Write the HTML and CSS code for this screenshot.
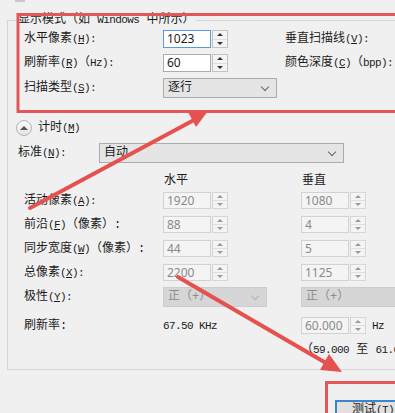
FILE: index.html
```html
<!DOCTYPE html>
<html lang="zh-CN">
<head>
  <meta charset="UTF-8">
  <meta name="viewport" content="width=device-width, initial-scale=1.0">
  <title>显示模式</title>
  <link rel="stylesheet" href="styles.css">
</head>
<body>
  <div class="screen">
    <div class="stub"></div>

    <fieldset class="mode">
      <legend>显示模式（如 <span class="lat">Windows</span> 中所示）</legend>

      <div class="mode-grid">
        <label>水平像素<span class="lat">(<u>H</u>):</span></label>
        <div class="spinbox tall"><span class="box focus">1023</span><span class="spin"><i></i><i class="down"></i></span></div>
        <label>垂直扫描线<span class="lat">(<u>V</u>):</span></label>

        <label>刷新率<span class="lat">(<u>R</u>)</span>（<span class="lat">Hz):</span></label>
        <div class="spinbox tall"><span class="box">60</span><span class="spin"><i></i><i class="down"></i></span></div>
        <label>颜色深度<span class="lat">(<u>C</u>)</span>（<span class="lat">bpp):</span></label>

        <label>扫描类型<span class="lat">(<u>S</u>):</span></label>
        <div class="combo scan">逐行</div>
        <span></span>
      </div>

      <div class="toggle"><span class="collapse"></span>计时<span class="lat">(<u>M</u>)</span></div>

      <div class="standard">
        <label>标准<span class="lat">(<u>N</u>):</span></label>
        <div class="combo wide">自动</div>
      </div>

      <div class="trow head"><span></span><span>水平</span><span>垂直</span></div>

      <div class="trow off">
        <label>活动像素<span class="lat">(<u>A</u>):</span></label>
        <div class="spinbox"><span class="box">1920</span><span class="spin"><i></i><i class="down"></i></span></div>
        <div class="spinbox"><span class="box">1080</span><span class="spin"><i></i><i class="down"></i></span></div>
      </div>
      <div class="trow off">
        <label>前沿<span class="lat">(<u>F</u>)</span>（像素）:</label>
        <div class="spinbox"><span class="box">88</span><span class="spin"><i></i><i class="down"></i></span></div>
        <div class="spinbox"><span class="box">4</span><span class="spin"><i></i><i class="down"></i></span></div>
      </div>
      <div class="trow off">
        <label>同步宽度<span class="lat">(<u>W</u>)</span>（像素）:</label>
        <div class="spinbox"><span class="box">44</span><span class="spin"><i></i><i class="down"></i></span></div>
        <div class="spinbox"><span class="box">5</span><span class="spin"><i></i><i class="down"></i></span></div>
      </div>
      <div class="trow off">
        <label>总像素<span class="lat">(<u>X</u>):</span></label>
        <div class="spinbox"><span class="box">2200</span><span class="spin"><i></i><i class="down"></i></span></div>
        <div class="spinbox"><span class="box">1125</span><span class="spin"><i></i><i class="down"></i></span></div>
      </div>
      <div class="trow polarity off">
        <label>极性<span class="lat">(<u>Y</u>):</span></label>
        <div class="combo dis">正（+）</div>
        <div class="combo dis long">正（+）</div>
      </div>
      <div class="trow refresh off">
        <label>刷新率:</label>
        <span class="lat">67.50 KHz</span>
        <div class="hz">
          <div class="spinbox"><span class="box">60.000</span><span class="spin"><i></i><i class="down"></i></span></div>
          <span class="lat">Hz</span>
        </div>
      </div>
      <div class="trow range">
        <span></span><span></span>
        <span>（<span class="lat">59.000</span> 至 <span class="lat">61.000</span>）</span>
      </div>
    </fieldset>

    <div class="footer">
      <button type="button">测试<span class="lat">(<u>T</u>)</span></button>
    </div>

    <!-- annotation marks drawn over the dialog -->
    <svg class="marks" width="395" height="413" viewBox="0 0 395 413">
      <g fill="none" stroke="#e2575a" stroke-width="3">
        <rect x="18" y="14.5" width="400" height="97"/>
        <rect x="326.5" y="382.5" width="100" height="60"/>
      </g>
      <g stroke="#e5514f" stroke-width="4" stroke-linecap="round">
        <line x1="30" y1="208" x2="194" y2="120"/>
        <line x1="178" y1="277" x2="326" y2="363"/>
      </g>
      <g fill="#e5514f">
        <polygon points="208,111 196,127 188,112"/>
        <polygon points="342,372 320,370 329,354"/>
      </g>
    </svg>
  </div>
</body>
</html>
```

FILE: styles.css
```css
* {
  box-sizing: border-box;
}
body {
  margin: 0;
  background: #f0f0f0;
  font-family: "Liberation Mono", "Noto Sans CJK SC", monospace;
  font-size: 12px;
  line-height: 16px;
  color: #1b1b1b;
}
u {
  text-decoration: underline;
  text-underline-offset: 1px;
}
.screen {
  position: relative;
  width: 395px;
  height: 413px;
  overflow: hidden;
}
.stub {
  margin-left: 15px;
  width: 10px;
  height: 2px;
  background: #c9c9c9;
}
/* half-width latin, like the dialog's bitmap font */
.lat {
  font-family: "Liberation Mono", monospace;
  font-size: 11px;
  letter-spacing: -0.6px;
}

/* group box */
.mode {
  margin: 10px 0 0 7px;
  padding: 0;
  width: 400px;
  height: 358px;
  min-width: 0;
  border: 1px solid #d5d5d5;
}
.mode legend {
  margin-left: 8px;
  padding: 0 2px;
  line-height: 16px;
}
.mode-grid {
  display: grid;
  grid-template-columns: 139px 122px auto;
  grid-template-rows: 18px 18px 20px;
  row-gap: 6px;
  align-items: center;
  margin-top: 2px;
  padding-left: 16px;
}

/* spin boxes */
.spinbox {
  display: flex;
  gap: 1px;
  height: 17px;
}
.spinbox.tall {
  height: 18px;
}
.box {
  width: 48px;
  height: 100%;
  padding: 0 3px;
  border: 1px solid #abadb3;
  background: #fff;
  font-family: "Noto Sans", sans-serif;
  font-size: 12px;
  line-height: 15px;
}
.box.focus {
  border-color: #5b9bd5;
}
.spin {
  width: 16px;
  display: flex;
  flex-direction: column;
  border: 1px solid #c3c3c3;
  background: #f4f4f4;
}
.spin i {
  flex: 1;
  display: flex;
  align-items: center;
  justify-content: center;
}
.spin i::before {
  content: "";
  border: 3px solid transparent;
  border-top: 0;
  border-bottom: 3px solid #333;
}
.spin i.down {
  border-top: 1px solid #dedede;
}
.spin i.down::before {
  border-bottom: 0;
  border-top: 3px solid #333;
}
.off .box {
  background: #f4f4f4;
  border-color: #d2d2d2;
  color: #8a8a8a;
}
.off .spin {
  border-color: #d6d6d6;
}
.off .spin i::before {
  border-bottom-color: #9a9a9a;
}
.off .spin i.down::before {
  border-top-color: #9a9a9a;
}

/* combo boxes */
.combo {
  position: relative;
  height: 20px;
  padding: 0 4px;
  border: 1px solid #adadad;
  background: #e5e5e5;
  line-height: 18px;
}
.combo::after {
  content: "";
  position: absolute;
  right: 8px;
  top: 5px;
  width: 5px;
  height: 5px;
  border-right: 1px solid #666;
  border-bottom: 1px solid #666;
  transform: rotate(45deg);
}
.combo.scan {
  width: 114px;
}
.combo.wide {
  width: 245px;
}
.combo.dis {
  width: 104px;
  background: #d6d6d6;
  border-color: #cdcdcd;
  color: #8c8c8c;
}
.combo.dis::after {
  border-color: #b0b0b0;
}
.combo.dis.long {
  width: 110px;
}

/* timing section */
.toggle {
  display: flex;
  align-items: center;
  height: 16px;
  margin-top: 22px;
  padding-left: 8px;
}
.collapse {
  width: 16px;
  height: 16px;
  margin-right: 6px;
  border: 1px solid #b5b5b5;
  border-radius: 50%;
  background: linear-gradient(#fdfdfd, #e2e2e2);
  display: flex;
  align-items: center;
  justify-content: center;
}
.collapse::before {
  content: "";
  margin-top: -1px;
  border: 4px solid transparent;
  border-top: 0;
  border-bottom: 4px solid #4d5561;
}
.standard {
  display: flex;
  align-items: center;
  margin-top: 7px;
  padding-left: 10px;
}
.standard label {
  width: 81px;
}
.trow {
  display: grid;
  grid-template-columns: 139px 138px auto;
  align-items: center;
  height: 17px;
  margin-top: 7px;
  padding-left: 16px;
}
.trow.head {
  height: 16px;
  margin-top: 10px;
}
.trow.head span {
  padding-left: 1px;
}
.trow.head + .trow {
  margin-top: 3px;
}
.trow.polarity {
  height: 20px;
  margin-top: 6px;
}
.trow.refresh {
  margin-top: 10px;
}
.trow.refresh > .lat {
  color: #1b1b1b;
}
.hz {
  display: flex;
  align-items: center;
  gap: 6px;
}
.trow.range {
  height: 16px;
  margin-top: 8px;
  white-space: nowrap;
}

/* footer */
.footer {
  padding: 30px 0 0 335px;
}
.footer button {
  width: 76px;
  height: 23px;
  padding: 0 0 4px;
  border: 2px solid #3c84cc;
  background: #e1e1e1;
  font: inherit;
  color: #1b1b1b;
}

.marks {
  position: absolute;
  left: 0;
  top: 0;
  pointer-events: none;
}
```
